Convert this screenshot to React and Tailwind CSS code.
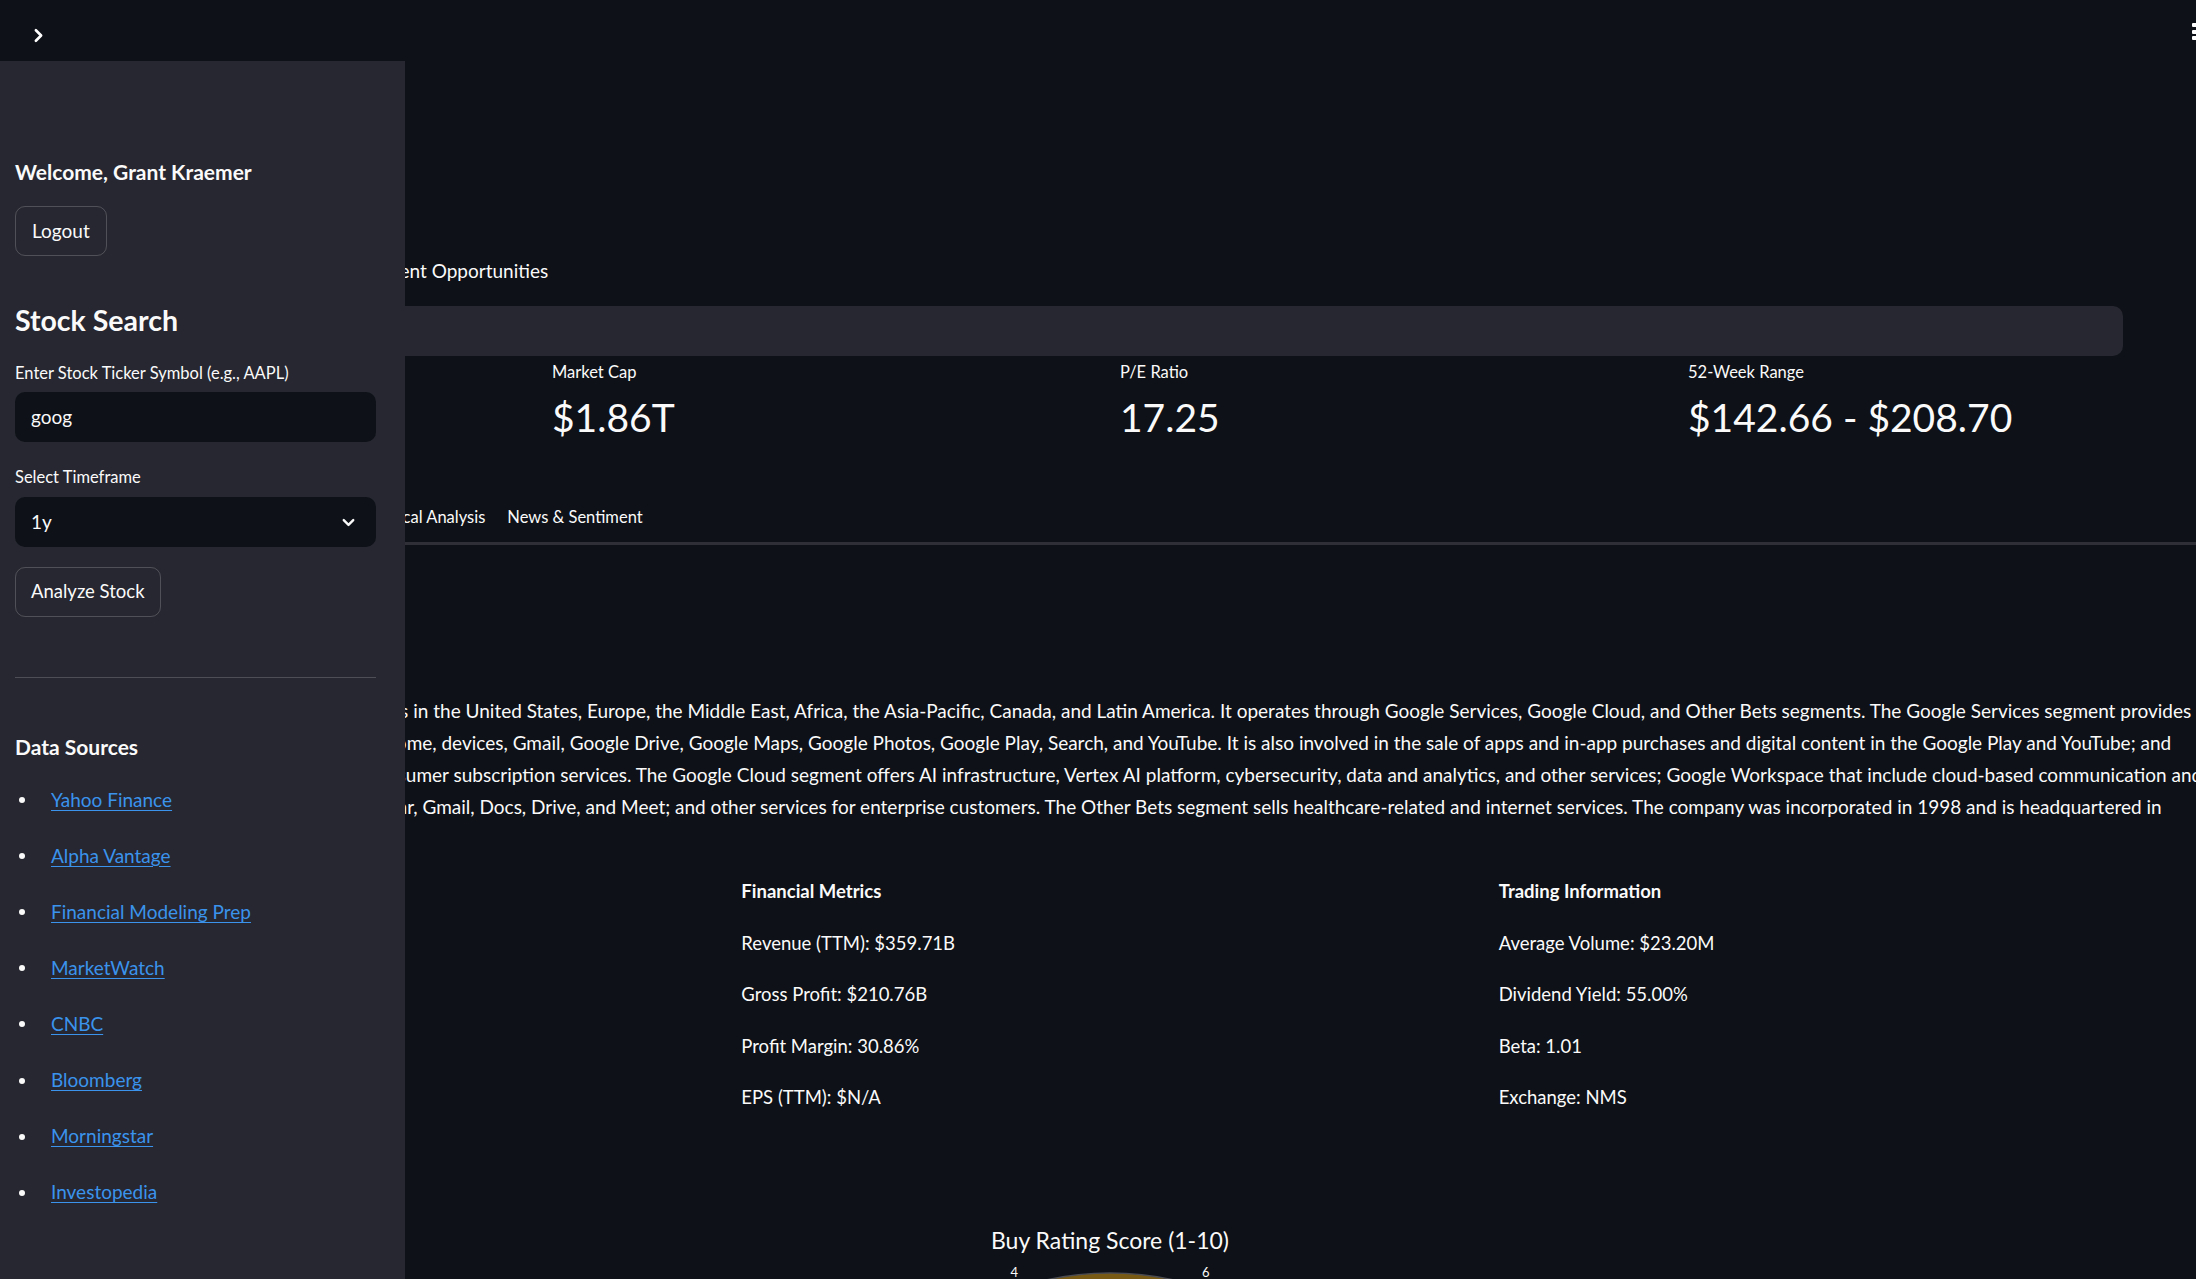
import React from 'react';
import { ChevronRight, ChevronDown } from 'lucide-react';

const SOURCES = [
  'Yahoo Finance',
  'Alpha Vantage',
  'Financial Modeling Prep',
  'MarketWatch',
  'CNBC',
  'Bloomberg',
  'Morningstar',
  'Investopedia',
];

const METRICS = [
  { label: 'Current Price', value: '$153.35' },
  { label: 'Market Cap', value: '$1.86T' },
  { label: 'P/E Ratio', value: '17.25' },
  { label: '52-Week Range', value: '$142.66 - $208.70' },
];

const TABS = ['Overview', 'Buy Rating', 'Price Chart', 'Metrics', 'Technical Analysis', 'News & Sentiment'];

// company description, broken the way the app wraps it
const DESCRIPTION = [
  'Alphabet Inc. offers various products and platforms in the United States, Europe, the Middle East, Africa, the Asia-Pacific, Canada, and Latin America. It operates through Google Services, Google Cloud, and Other Bets segments. The Google Services segment provides',
  'products and services, including ads, Android, Chrome, devices, Gmail, Google Drive, Google Maps, Google Photos, Google Play, Search, and YouTube. It is also involved in the sale of apps and in-app purchases and digital content in the Google Play and YouTube; and',
  'devices, as well as in the provision of YouTube consumer subscription services. The Google Cloud segment offers AI infrastructure, Vertex AI platform, cybersecurity, data and analytics, and other services; Google Workspace that include cloud-based communication and',
  'collaboration tools for enterprises, such as Calendar, Gmail, Docs, Drive, and Meet; and other services for enterprise customers. The Other Bets segment sells healthcare-related and internet services. The company was incorporated in 1998 and is headquartered in',
  'Mountain View, California.',
];

const INFO_COLUMNS = [
  {
    title: 'Company Information',
    rows: ['Sector: Communication Services', 'Industry: Internet Content & Information', 'Country: United States', 'Employees: 183,323'],
  },
  {
    title: 'Financial Metrics',
    rows: ['Revenue (TTM): $359.71B', 'Gross Profit: $210.76B', 'Profit Margin: 30.86%', 'EPS (TTM): $N/A'],
  },
  {
    title: 'Trading Information',
    rows: ['Average Volume: $23.20M', 'Dividend Yield: 55.00%', 'Beta: 1.01', 'Exchange: NMS'],
  },
];

function Gauge() {
  const cx = 320;
  const cy = 312;
  const ro = 294;
  const ri = 200;
  const ticks = [0, 2, 4, 6, 8, 10];
  return (
    <svg width="640" height="320" viewBox="0 0 640 320" className="block">
      <path
        d={`M ${cx - ro} ${cy} A ${ro} ${ro} 0 0 1 ${cx + ro} ${cy} L ${cx + ri} ${cy} A ${ri} ${ri} 0 0 0 ${cx - ri} ${cy} Z`}
        fill="#785a14"
        stroke="#4b4c52"
        strokeWidth="1.5"
      />
      {ticks.map((t) => {
        const a = Math.PI - (t / 10) * Math.PI;
        const x = cx + 310 * Math.cos(a);
        const y = cy - 310 * Math.sin(a);
        return (
          <text key={t} x={x} y={y + 5} textAnchor="middle" fill="#fafafa" fontSize="13" fontFamily="Lato, sans-serif">
            {t}
          </text>
        );
      })}
    </svg>
  );
}

export default function App() {
  return (
    <div className="relative w-[2196px] h-[1279px] overflow-hidden bg-[#0e1117] text-[#fafafa] font-['Lato','Noto_Sans',sans-serif]">

      {/* Header */}
      <header className="h-[61px] flex items-start justify-between pt-[17px]">
        <button className="ml-[20px] w-[36px] h-[36px] flex items-center justify-center text-white">
          <ChevronRight className="w-[21px] h-[21px]" strokeWidth={3} />
        </button>
        <div className="flex flex-col gap-[2.5px] mt-[6px] mr-[-1px]">
          <span className="w-[5px] h-[4px] bg-white rounded-[1px]" />
          <span className="w-[5px] h-[4px] bg-white rounded-[1px]" />
          <span className="w-[5px] h-[4px] bg-white rounded-[1px]" />
        </div>
      </header>

      {/* Main content (sits under the sidebar) */}
      <main className="ml-[-16px] w-[2252px] pt-[194px]">
        <p className="text-[19px] leading-[32px] whitespace-nowrap">
          Analyze stocks with real-time data to find Investment Opportunities
        </p>

        <div className="mt-[19px] h-[50px] w-[2139px] rounded-[10px] bg-[#262730]" />

        <div className="mt-[5px] grid grid-cols-4 gap-[20px]">
          {METRICS.map((m) => (
            <div key={m.label} className="flex flex-col">
              <span className="text-[16.5px] leading-[22px]">{m.label}</span>
              <span className="mt-[6px] text-[39px] leading-[56px]">{m.value}</span>
            </div>
          ))}
        </div>

        <div className="mt-[52px]">
          <div className="h-[45px] flex items-center gap-[22px] pb-[5px] text-[16.5px]">
            {TABS.map((t) => (
              <span key={t} className="whitespace-nowrap">{t}</span>
            ))}
          </div>
          <div className="h-[3px] bg-[#2f3037]" />
        </div>

        <div className="mt-[150px] text-[19px] leading-[32px]">
          {DESCRIPTION.map((line, i) => (
            <div key={i} className="whitespace-nowrap">{line}</div>
          ))}
        </div>

        <div className="mt-[20px] grid grid-cols-3 gap-[20px]">
          {INFO_COLUMNS.map((col) => (
            <div key={col.title} className="flex flex-col gap-[19.6px] text-[18.5px] leading-[32px]">
              <span className="font-bold">{col.title}</span>
              {col.rows.map((r) => (
                <span key={r}>{r}</span>
              ))}
            </div>
          ))}
        </div>

        <div className="mt-[113px] flex flex-col items-center">
          <span className="text-[23px] leading-[29px]">Buy Rating Score (1-10)</span>
          <Gauge />
        </div>
      </main>

      {/* Sidebar overlay */}
      <aside className="absolute left-0 top-[61px] bottom-0 w-[405px] bg-[#262730] px-[15px] pr-[29px] pt-[97px] flex flex-col">
        <h3 className="text-[21px] leading-[28px] font-bold">Welcome, Grant Kraemer</h3>
        <button className="mt-[20px] self-start h-[50px] px-[16px] rounded-[10px] border border-[rgba(250,250,250,0.2)] text-[19px]">
          Logout
        </button>

        <h2 className="mt-[44px] text-[28.5px] leading-[40px] font-bold">Stock Search</h2>

        <label className="mt-[22px] text-[16.5px] leading-[22px]">Enter Stock Ticker Symbol (e.g., AAPL)</label>
        <div className="mt-[8px] h-[50px] rounded-[10px] bg-[#0e1117] flex items-center px-[16px] text-[19px]">
          goog
        </div>

        <label className="mt-[24px] text-[16.5px] leading-[22px]">Select Timeframe</label>
        <div className="mt-[9px] h-[50px] rounded-[10px] bg-[#0e1117] flex items-center justify-between pl-[16px] pr-[18px] text-[19px]">
          <span>1y</span>
          <ChevronDown className="w-[19px] h-[19px]" strokeWidth={3} />
        </div>

        <button className="mt-[20px] self-start h-[50px] px-[15px] rounded-[10px] border border-[rgba(250,250,250,0.2)] text-[18.5px]">
          Analyze Stock
        </button>

        <div className="mt-[60px] h-px bg-[#4d4e56]" />

        <h3 className="mt-[55px] text-[21px] leading-[28px] font-bold">Data Sources</h3>
        <ul className="mt-[11px] flex flex-col">
          {SOURCES.map((s) => (
            <li key={s} className="h-[56.1px] flex items-center">
              <span className="ml-[4px] w-[6px] h-[6px] rounded-full bg-[#fafafa]" />
              <a href="#" className="ml-[26px] text-[19px] text-[#3b93ec] underline underline-offset-[3px]">{s}</a>
            </li>
          ))}
        </ul>
      </aside>
    </div>
  );
}
